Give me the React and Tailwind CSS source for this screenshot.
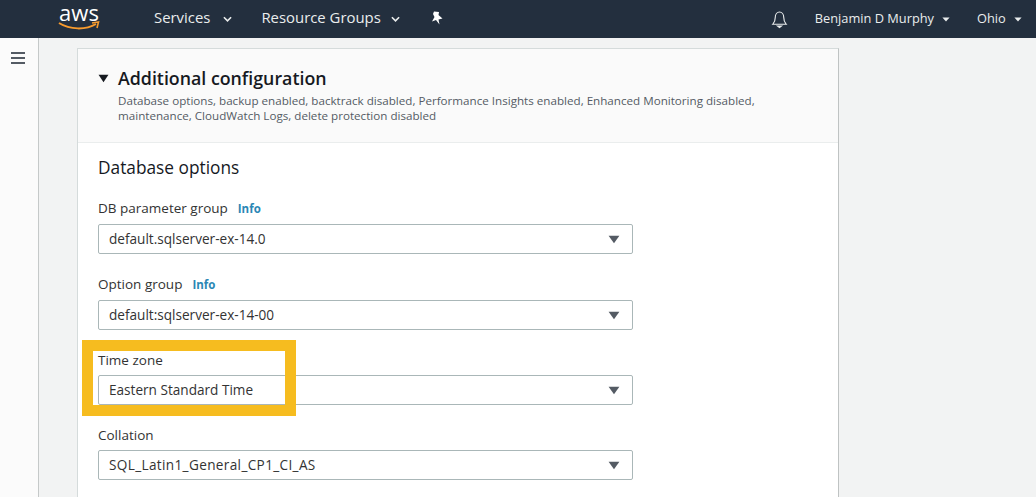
import React from "react";

const font = { fontFamily: '"Open Sans", "Noto Sans", sans-serif' };

function Caret({ className = "" }) {
  return (
    <svg viewBox="0 0 10 6" className={className} fill="currentColor" preserveAspectRatio="none">
      <path d="M0.5 0.5 H9.5 L5 5.5 Z" />
    </svg>
  );
}

function Chevron({ className = "" }) {
  return (
    <svg viewBox="0 0 10 6" className={className} fill="none" stroke="currentColor" strokeWidth="1.8">
      <path d="M1 1 L5 5 L9 1" />
    </svg>
  );
}

function Field({ label, info, value, mb, valueClass = "", gap = "mt-[4px]" }) {
  return (
    <div className={mb}>
      <div className="flex h-[24px] items-baseline gap-[10px] text-[13.5px] leading-[24px] text-[#333]">
        <span>{label}</span>
        {info && <span className="text-[11.5px] font-bold text-[#2b87b5]">Info</span>}
      </div>
      <div className={`${gap} flex h-[30px] w-[535px] items-center justify-between rounded-[2px] border border-[#aab7b8] bg-white pl-[10px] pr-[12px] text-[13.6px] text-[#333]`}>
        <span className={valueClass}>{value}</span>
        <Caret className="h-[9px] w-[12px] text-[#545b64]" />
      </div>
    </div>
  );
}

export default function App() {
  return (
    <div style={font} className="relative flex h-[497px] w-[1036px] flex-col overflow-hidden bg-[#f2f3f3]">
      <header className="flex h-[38px] shrink-0 items-center bg-[#232f3e] text-[#eaeded]">
        <div className="ml-[58px] flex h-[38px] w-[42px] flex-col items-center pt-[4px]">
          <span className="text-[22px] leading-[16px] text-white">aws</span>
          <svg viewBox="0 0 42 10" className="mt-[1px] h-[10px] w-[42px]" fill="none">
            <path d="M1 2 C 12 9, 28 9, 38 3" stroke="#f79b2e" strokeWidth="2" />
            <path d="M34 2 L40.5 1 L39 7" stroke="#f79b2e" strokeWidth="1.6" />
          </svg>
        </div>
        <span className="ml-[54px] mt-[-4px] text-[14.9px]">Services</span>
        <Chevron className="ml-[13px] h-[6px] w-[9px]" />
        <span className="ml-[29px] mt-[-4px] text-[14.9px]">Resource Groups</span>
        <Chevron className="ml-[10px] h-[6px] w-[9px]" />
        <svg viewBox="0 0 14 14" className="ml-[30px] mt-[-3px] h-[14px] w-[14px]" fill="white">
          <path d="M4 0.5 L9 1 L8.5 4 L12.5 7.5 L8.5 8.5 L9.5 13.5 L6 9 L2 10.5 L4.5 6 L3 3 Z" />
        </svg>
        <svg viewBox="0 0 18 20" className="ml-[327px] h-[19px] w-[17px]" fill="none" stroke="#eaeded" strokeWidth="1.2">
          <path d="M2 15 C4 13 4.5 11 4.5 8 C4.5 4.5 6.5 2 9 2 C11.5 2 13.5 4.5 13.5 8 C13.5 11 14 13 16 15 Z" />
          <path d="M7 17 H11 L9 18.5 Z" fill="#eaeded" />
        </svg>
        <span className="ml-[27px] text-[12.8px]">Benjamin D Murphy</span>
        <Caret className="ml-[8px] h-[5px] w-[8px]" />
        <span className="ml-[27px] text-[12.8px]">Ohio</span>
        <Caret className="ml-[8px] h-[5px] w-[8px]" />
      </header>

      <div className="flex min-h-0 flex-1">
        <aside className="flex w-[39px] shrink-0 justify-center border-r border-[#c5c9c9] bg-[#fbfbfb] pr-[3px] pt-[14px]">
          <div className="flex h-[12px] w-[14px] flex-col justify-between">
            <div className="h-[2px] bg-[#545b64]" />
            <div className="h-[2px] bg-[#545b64]" />
            <div className="h-[2px] bg-[#545b64]" />
          </div>
        </aside>

        <main className="min-w-0 flex-1 pl-[38px] pt-[10px]">
          <section className="w-[762px] border-x border-t border-[#d5dbdb] border-r-[#bfc3c3] bg-white pb-[20px]">
            <div className="h-[94px] border-b border-[#eaeded] bg-[#fafafa] pl-[20px] pt-[17px]">
              <div className="flex items-center">
                <Caret className="h-[9px] w-[11px] text-[#16191f]" />
                <h2 className="ml-[9px] text-[17.8px] font-semibold leading-[24px] text-[#16191f]">Additional configuration</h2>
              </div>
              <p className="ml-[20px] mt-[3px] w-[660px] text-[11.63px] leading-[15px] text-[#545b64]">
                Database options, backup enabled, backtrack disabled, Performance Insights enabled, Enhanced Monitoring disabled, maintenance, CloudWatch Logs, delete protection disabled
              </p>
            </div>
            <div className="pl-[20px] pt-[13px]">
              <h3 className="mb-[16px] text-[17.3px] leading-[24px] text-[#16191f]">Database options</h3>
              <Field label="DB parameter group" info value="default.sqlserver-ex-14.0" mb="mb-[18px]" />
              <Field label="Option group" info value="default:sqlserver-ex-14-00" mb="mb-[18px]" />
              <Field label="Time zone" value="Eastern Standard Time" mb="mb-[18px]" gap="mt-[3px]" />
              <Field label="Collation" value="SQL_Latin1_General_CP1_CI_AS" valueClass="tracking-[0.35px]" gap="mt-[3px]" />
            </div>
          </section>
        </main>
      </div>

      <div className="pointer-events-none absolute left-[82px] top-[340px] h-[76px] w-[214px] border-[11px] border-[#f6bc1f]" />
    </div>
  );
}
